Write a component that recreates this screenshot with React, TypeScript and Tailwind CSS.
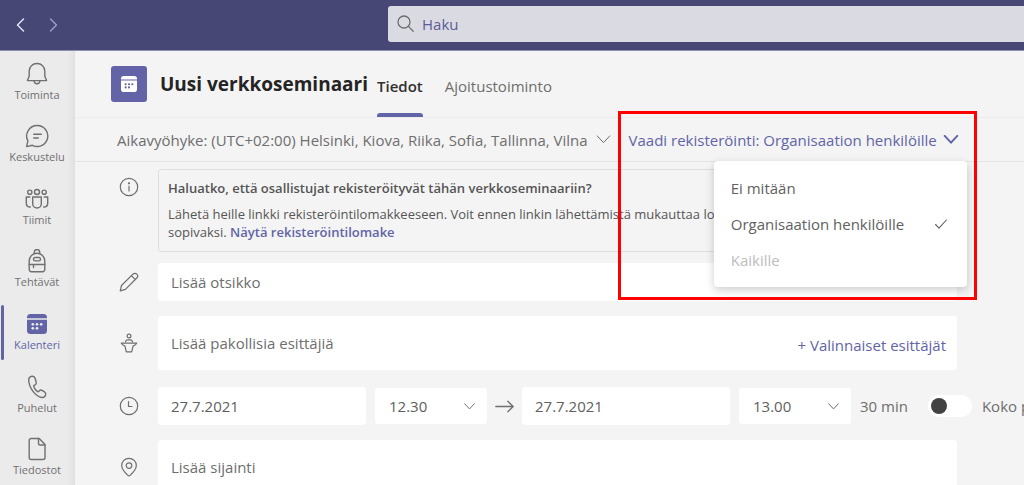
import React from "react";

type IconProps = { className?: string };

const Svg = ({
  className = "",
  size = 20,
  children,
  sw = 1.2,
}: {
  className?: string;
  size?: number;
  children: React.ReactNode;
  sw?: number;
}) => (
  <svg
    className={className}
    width={size}
    height={size}
    viewBox={`0 0 ${size} ${size}`}
    fill="none"
    stroke="currentColor"
    strokeWidth={sw}
    strokeLinecap="round"
    strokeLinejoin="round"
    aria-hidden="true"
  >
    {children}
  </svg>
);

const BellIcon = () => (
  <Svg size={24} sw={1.4}>
    <path d="M12 1.500c-4.500 0-7.800 3.200-7.800 7.500v5.200L2.400 18.600h19.200L19.800 14.200V9c0-4.300-3.300-7.500-7.800-7.500Z" />
    <path d="M9 18.800c.2 1.900 1.400 3 3 3s2.800-1.100 3-3" />
  </Svg>
);

const ChatIcon = () => (
  <Svg size={24} sw={1.4}>
    <path d="M12.200 1.500a10.500 10.500 0 1 1-4.800 19.800L1.600 22.600l1.300-5.700A10.500 10.500 0 0 1 12.200 1.500Z" />
    <path d="M8.700 10.200h7.600M8.700 14h4.600" />
  </Svg>
);

const TeamsIcon = () => (
  <Svg size={24} sw={1.4}>
    <circle cx="12" cy="5" r="2.500" />
    <circle cx="4.800" cy="5.200" r="2.100" />
    <circle cx="19.200" cy="5.200" r="2.100" />
    <path d="M7.700 10h8.600v6.700a4.300 4.300 0 0 1-8.600 0Z" />
    <path d="M4.800 10H1.300v6.200c0 2.500 1.500 3.800 4 3.800M19.200 10h3.500v6.200c0 2.500-1.500 3.800-4 3.800" />
  </Svg>
);

const BackpackIcon = () => (
  <Svg size={24} sw={1.4}>
    <path d="M4.200 12a7.800 7.800 0 0 1 15.600 0v8.500a2.200 2.200 0 0 1-2.200 2.200H6.400a2.200 2.200 0 0 1-2.200-2.200Z" />
    <path d="M9.300 4.500V3.200a2.700 2.700 0 0 1 5.400 0v1.300" />
    <path d="M10.200 8.500h3.600a1.700 1.700 0 0 1 0 3.400h-3.600a1.700 1.700 0 0 1 0-3.400ZM4.200 15.500h15.600M8.500 15.500v3" />
  </Svg>
);

const CalendarIcon = ({ className = "" }: IconProps) => (
  <svg className={className} viewBox="0 0 20 20" fill="none" aria-hidden="true">
    <path d="M0 4.300V3.500A3.500 3.500 0 0 1 3.500 0h13A3.500 3.500 0 0 1 20 3.500v.8Z" fill="currentColor" />
    <path d="M0 5.700h20v10.800a3.500 3.500 0 0 1-3.500 3.500h-13A3.500 3.500 0 0 1 0 16.500Z" fill="currentColor" />
    <g className="fill-[var(--dot)]">
      <circle cx="5.800" cy="10.300" r="1.350" />
      <circle cx="10" cy="10.300" r="1.350" />
      <circle cx="14.200" cy="10.300" r="1.350" />
      <circle cx="5.800" cy="14.300" r="1.350" />
      <circle cx="10" cy="14.300" r="1.350" />
    </g>
  </svg>
);

const PhoneIcon = () => (
  <Svg size={24} sw={1.4}>
    <path d="M7 1.300c-2 .3-3.300 1.800-3.300 4C4 13 10.500 21.500 16.800 22.500c2 .2 3.600-1.200 3.900-3 .2-1-.2-1.800-.9-2.300l-2.700-1.800c-.9-.6-2-.5-2.700.3l-.8.9c-.3.3-.7.3-1 .1-1.900-1.300-3.300-3.500-3.900-5.500-.1-.4 0-.7.400-.9l1-.5c1-.5 1.400-1.500 1.100-2.500L10.200 3.500C9.700 1.900 8.500 1.100 7 1.300Z" />
  </Svg>
);

const FileIcon = () => (
  <Svg size={24} sw={1.4}>
    <path d="M6.200 1.500h8L20 7.500v13a2 2 0 0 1-2 2H6.200a2 2 0 0 1-2-2v-17a2 2 0 0 1 2-2Z" />
    <path d="M13.500 1.600v4.600a1.800 1.800 0 0 0 1.800 1.800h4.600" />
  </Svg>
);

const Chevron = ({ className = "" }: IconProps) => (
  <svg
    className={className}
    viewBox="0 0 16 10"
    fill="none"
    stroke="currentColor"
    strokeLinecap="round"
    strokeLinejoin="round"
    aria-hidden="true"
  >
    <path d="M1 1l7 7.500L15 1" vectorEffect="non-scaling-stroke" />
  </svg>
);

const navItems = [
  { label: "Toiminta", icon: <BellIcon /> },
  { label: "Keskustelu", icon: <ChatIcon /> },
  { label: "Tiimit", icon: <TeamsIcon /> },
  { label: "Tehtävät", icon: <BackpackIcon /> },
  {
    label: "Kalenteri",
    active: true,
    icon: (
      <span className="flex h-6 items-center">
        <CalendarIcon className="size-5 [--dot:#ebebeb]" />
      </span>
    ),
  },
  { label: "Puhelut", icon: <PhoneIcon /> },
  { label: "Tiedostot", icon: <FileIcon /> },
];

const Sidebar = () => (
  <nav
    aria-label="Sovellukset"
    className="w-[75px] shrink-0 bg-[#ebebeb] bg-linear-to-r from-[#ebebeb] from-90% to-[#e0e0e0]"
  >
    <ul className="grid h-[438px] grid-rows-7">
      {navItems.map((item) => (
        <li key={item.label} className="relative">
          <a
            href="#"
            aria-current={item.active ? "page" : undefined}
            className={`flex h-full flex-col items-center justify-center gap-px pr-px text-[11px] leading-4 ${
              item.active ? "text-[#6264a7]" : "text-[#707070]"
            }`}
          >
            {item.active && (
              <span className="absolute inset-y-1 left-px w-[3px] rounded-sm bg-[#6264a7]" />
            )}
            {item.icon}
            {item.label}
          </a>
        </li>
      ))}
    </ul>
  </nav>
);

const Row = ({ icon, className = "", children }: { icon: React.ReactNode; className?: string; children: React.ReactNode }) => (
  <div className={`flex items-center ${className}`}>
    <span className="flex w-[83px] shrink-0 justify-center pl-6 text-[#6e6e6e]">{icon}</span>
    {children}
  </div>
);

const TimeSelect = ({ label, value }: { label: string; value: string }) => (
  <div className="relative w-28 shrink-0">
    <select
      aria-label={label}
      defaultValue={value}
      className="h-9 w-full appearance-none rounded-[3px] bg-white pl-[14px] text-[#606060]"
    >
      <option>{value}</option>
    </select>
    <Chevron className="pointer-events-none absolute top-[15px] right-3 h-[7px] w-[11px]" />
  </div>
);

const menuItems = [
  { label: "Ei mitään" },
  { label: "Organisaation henkilöille", checked: true },
  { label: "Kaikille", disabled: true },
];

const RegistrationMenu = () => (
  <div className="relative flex h-full items-center">
    <button type="button" aria-haspopup="menu" aria-expanded="true" className="flex items-center gap-1.5 text-[#6264a7]">
      Vaadi rekisteröinti: Organisaation henkilöille
      <Chevron className="h-[9px] w-4 stroke-2" />
    </button>
    <div
      role="menu"
      className="absolute top-[43px] -right-2 z-10 flex w-[253px] flex-col rounded bg-white py-[9px] shadow-[0_3px_10px_rgba(0,0,0,0.2)]"
    >
      {menuItems.map((item) => (
        <button
          key={item.label}
          type="button"
          role="menuitemradio"
          aria-checked={!!item.checked}
          disabled={item.disabled}
          className="flex h-9 items-center justify-between pr-5 pl-[17px] text-[#616161] disabled:text-[#bdbdbd]"
        >
          {item.label}
          {item.checked && (
            <Svg size={12} sw={1.1}>
              <path d="M.6 6.500l3.400 3.600L11.400 2" />
            </Svg>
          )}
        </button>
      ))}
    </div>
    <div className="pointer-events-none absolute -top-[7px] -right-[18px] -left-[11px] z-20 h-[189px] border-3 border-[#ff0000]" />
  </div>
);

export default function App() {
  return (
    <div className="flex h-screen flex-col overflow-hidden bg-[#f4f4f4] font-['Open_Sans','Noto_Sans',sans-serif] text-[15px] leading-5 text-[#6e6e6e]">
      <header className="flex h-[51px] shrink-0 items-center border-b border-[#8e8eb5] bg-[#464775]">
        <div className="flex w-[388px] shrink-0 items-center gap-6 pl-4 text-[#e2e2f0]">
          <button type="button" aria-label="Takaisin">
            <Svg size={9} className="h-[14px] w-[9px] overflow-visible" sw={1.5}>
              <path d="M7.500-1.500l-6 6 6 6" />
            </Svg>
          </button>
          <button type="button" aria-label="Eteenpäin" className="text-[#a3a3c4]">
            <Svg size={9} className="h-[14px] w-[9px] overflow-visible" sw={1.3}>
              <path d="M1.500-1.500l6 6-6 6" />
            </Svg>
          </button>
        </div>
        <label className="-mr-2 mb-[3px] flex h-9 min-w-0 flex-1 items-center gap-2 rounded-[3px] bg-[#dadae3] pl-[9px] text-[#6e6e6e]">
          <Svg size={17} sw={1.3}>
            <circle cx="7" cy="7" r="6" />
            <path d="M11.400 11.400l4.800 4.800" />
          </Svg>
          <input
            type="search"
            aria-label="Haku"
            placeholder="Haku"
            className="min-w-0 flex-1 bg-transparent outline-none placeholder:text-[#5c5d96]"
          />
        </label>
      </header>

      <div className="flex min-h-0 flex-1">
        <Sidebar />

        <main className="min-w-0 flex-1">
          <div className="flex h-[67px] items-center border-b border-[#ececec] pl-9">
            <span className="flex size-9 items-center justify-center rounded-[3px] bg-[#6264a7] text-white">
              <CalendarIcon className="size-4 [--dot:#6264a7]" />
            </span>
            <h1 className="ml-[13px] shrink-0 text-[19px] leading-6 font-bold text-[#252424]">Uusi verkkoseminaari</h1>
            <div role="tablist" className="ml-[9px] flex h-full gap-[22px]">
              <button
                type="button"
                role="tab"
                aria-selected="true"
                className="relative h-full pt-1 font-semibold text-[#303030]"
              >
                Tiedot
                <span className="absolute inset-x-0 bottom-0 h-1 rounded-t-[3px] bg-[#6264a7]" />
              </button>
              <button type="button" role="tab" aria-selected="false" className="h-full pt-1">
                Ajoitustoiminto
              </button>
            </div>
          </div>

          <div className="flex h-11 items-center gap-[18px] border-b border-[#e4e4e4] pl-[42px] whitespace-nowrap">
            <button type="button" className="flex items-center gap-2">
              Aikavyöhyke: (UTC+02:00) Helsinki, Kiova, Riika, Sofia, Tallinna, Vilna
              <Chevron className="h-[9px] w-[15px]" />
            </button>
            <RegistrationMenu />
          </div>

          <form className="pt-[7px] pr-[67px]">
            <Row
              className="!items-start"
              icon={
                <Svg size={20} className="mt-2" sw={1.2}>
                  <circle cx="10" cy="10" r="8.700" />
                  <path d="M10 9v5" />
                  <circle cx="10" cy="6.300" r=".5" fill="currentColor" />
                </Svg>
              }
            >
              <section className="h-[83px] min-w-0 flex-1 overflow-hidden rounded-[3px] border border-[#dedede] px-[9px] pt-[9px] text-[13px] leading-[18px] whitespace-nowrap text-[#555]">
                <h2 className="font-semibold">Haluatko, että osallistujat rekisteröityvät tähän verkkoseminaariin?</h2>
                <p className="mt-2">
                  Lähetä heille linkki rekisteröintilomakkeeseen. Voit ennen linkin lähettämistä mukauttaa lomaketta
                  <br />
                  sopivaksi.{" "}
                  <a href="#" className="font-semibold text-[#6264a7]">
                    Näytä rekisteröintilomake
                  </a>
                </p>
              </section>
            </Row>

            <Row
              className="mt-[11px]"
              icon={
                <Svg size={20} sw={1.2}>
                  <path d="M1.200 18.800l1.300-5.300L13.900 2.100a2.700 2.700 0 0 1 3.900 3.900L6.400 17.400ZM12.400 3.700l3.900 3.900" />
                </Svg>
              }
            >
              <input
                type="text"
                aria-label="Otsikko"
                placeholder="Lisää otsikko"
                className="h-[38px] min-w-0 flex-1 rounded-[3px] bg-white px-[13px] outline-none placeholder:text-[#6e6e6e]"
              />
            </Row>

            <Row
              className="mt-[15px]"
              icon={
                <Svg size={20} sw={1.2}>
                  <circle cx="10" cy="3" r="1.900" />
                  <path d="M6.500 8.600c.2-1.200 1.200-1.800 2.500-1.800h2c1.300 0 2.300.6 2.500 1.800M2.300 10.200h15.400c-1.400 2.200-2.900 2.500-3.700 2.900l-1.300 5.700H7.300L6 13.100c-.8-.4-2.300-.7-3.700-2.900Z" />
                </Svg>
              }
            >
              <div className="flex h-[54px] min-w-0 flex-1 items-center rounded-[3px] bg-white pr-[11px] pl-[13px]">
                <input
                  type="text"
                  aria-label="Pakolliset esittäjät"
                  placeholder="Lisää pakollisia esittäjiä"
                  className="min-w-0 flex-1 outline-none placeholder:text-[#6e6e6e]"
                />
                <button type="button" className="mt-1 text-[#6264a7]">
                  + Valinnaiset esittäjät
                </button>
              </div>
            </Row>

            <Row
              className="mt-[17px] whitespace-nowrap"
              icon={
                <Svg size={20} sw={1.2}>
                  <circle cx="10" cy="10" r="8.700" />
                  <path d="M9.500 5.500V10.500h3.500" />
                </Svg>
              }
            >
              <input
                type="text"
                aria-label="Alkamispäivä"
                defaultValue="27.7.2021"
                className="mr-[9px] h-[38px] w-52 shrink-0 rounded-[3px] bg-white px-[13px] text-[#606060]"
              />
              <TimeSelect label="Alkamisaika" value="12.30" />
              <Svg size={19} className="mx-2 shrink-0" sw={1.3}>
                <path d="M.8 9.500h17.200M12.800 4.300l5.400 5.200-5.400 5.200" />
              </Svg>
              <input
                type="text"
                aria-label="Päättymispäivä"
                defaultValue="27.7.2021"
                className="mr-[9px] h-[38px] w-52 shrink-0 rounded-[3px] bg-white px-[13px] text-[#606060]"
              />
              <TimeSelect label="Päättymisaika" value="13.00" />
              <span className="ml-[9px]">30 min</span>
              <label className="ml-5 flex items-center gap-[10px]">
                <input
                  type="checkbox"
                  role="switch"
                  className="flex h-[22px] w-11 shrink-0 appearance-none items-center rounded-full bg-white pl-[3px] before:size-4 before:rounded-full before:bg-[#424242]"
                />
                Koko päivä
              </label>
            </Row>

            <Row
              className="mt-[15px]"
              icon={
                <Svg size={20} sw={1.2}>
                  <path d="M10 1.300a7.300 7.300 0 0 0-7.300 7.300c0 3.600 3 6.900 6.200 9.800a1.600 1.600 0 0 0 2.200 0c3.200-2.900 6.200-6.200 6.200-9.800A7.300 7.300 0 0 0 10 1.300Z" />
                  <circle cx="10" cy="8.600" r="2.800" />
                </Svg>
              }
            >
              <input
                type="text"
                aria-label="Sijainti"
                placeholder="Lisää sijainti"
                className="h-[54px] min-w-0 flex-1 rounded-[3px] bg-white px-[13px] outline-none placeholder:text-[#6e6e6e]"
              />
            </Row>
          </form>
        </main>
      </div>
    </div>
  );
}
